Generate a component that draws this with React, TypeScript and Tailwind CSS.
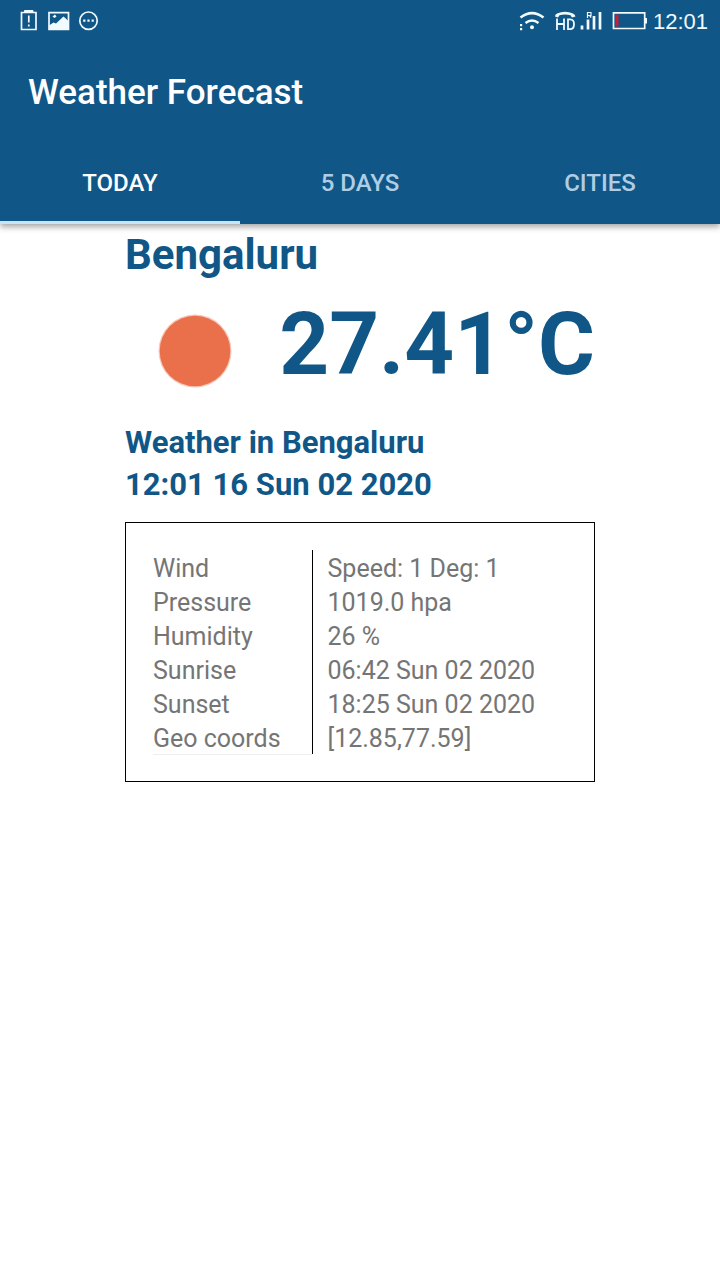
import { useState } from "react";

const tabs = ["TODAY", "5 DAYS", "CITIES"];

const details = [
  ["Wind", "Speed: 1 Deg: 1"],
  ["Pressure", "1019.0 hpa"],
  ["Humidity", "26 %"],
  ["Sunrise", "06:42 Sun 02 2020"],
  ["Sunset", "18:25 Sun 02 2020"],
  ["Geo coords", "[12.85,77.59]"],
];

function StatusBar() {
  return (
    <div className="flex h-[42px] items-center justify-between pr-3 pl-5 text-[#f0faff]">
      <svg width="80" height="42" viewBox="0 0 80 42" fill="none" stroke="currentColor" aria-hidden="true">
        <path d="M1.5 12.500h14.500v17H1.500z" strokeWidth="1.7" />
        <path d="M4.500 12V10.500h8.500v1.500z" fill="currentColor" strokeWidth="1" />
        <path d="M8.800 15.500v7M8.800 24.500v2" strokeWidth="1.700" />
        <path d="M29 12.700h19.500v16.600H29z" strokeWidth="1.700" />
        <path d="M29 29v-3.500l4.500-3 2.500 1 7.500-7 5 4.500v8z" fill="currentColor" stroke="none" />
        <path d="M32.500 16.500l2 1.500 2-1.500-1.500-2z" fill="currentColor" stroke="none" />
        <circle cx="68.500" cy="20.700" r="8.700" strokeWidth="1.700" />
        <path d="M63.200 20.700h2.200M67.400 20.700h2.200M71.600 20.700h2.200" strokeWidth="2.200" />
      </svg>
      <div className="flex items-center gap-[5px]">
        <svg width="130" height="42" viewBox="518 0 130 42" fill="none" stroke="currentColor" aria-hidden="true">
          <path d="M520.500 17.500q11.500-8.800 23 0" strokeWidth="2.600" />
          <path d="M525.500 23q6.500-5 13 0" strokeWidth="2.600" />
          <circle cx="532" cy="27.300" r="2" fill="currentColor" stroke="none" />
          <path d="M520 25.200h2.200M520 29.200h2.200" strokeWidth="2.200" />
          <path d="M555 16.500q0-2 2-3 8-3.600 16 0 2 1 2.500 3l-3.500 1-1.500-2.200q-5.500-1.500-11 0l-1.500 2.200z" fill="currentColor" stroke="none" />
          <path d="M557 18.500v11.500M564 18.500v11.500M557 24h7M568 19.300v9.900h2q4 0 4-5t-4-4.900z" strokeWidth="1.800" />
          <path d="M582 25.500v4M588 19.500v10M594 16v13.500M600 12v17.500" strokeWidth="2.700" />
          <path d="M587.500 18v-5.500h3.500v3h-3.500M589.500 15.500l1.800 2" strokeWidth="1.200" />
          <path d="M613.500 12.800h31.200v15.700h-31.200z" strokeWidth="1.700" />
          <path d="M645 18h2v5.500h-2z" fill="currentColor" stroke="none" />
          <path d="M615.500 14.500h3v12h-3z" fill="#c81e38" stroke="none" />
        </svg>
        <time className="pt-0.5 font-['Liberation_Sans',sans-serif] text-[22px] leading-6">12:01</time>
      </div>
    </div>
  );
}

export default function App() {
  const [active, setActive] = useState(0);

  return (
    <div className="min-h-screen bg-white font-[Roboto,sans-serif]">
      <header className="bg-[#105787] shadow-[0_3px_6px_rgba(0,0,0,0.35)]">
        <StatusBar />
        <div className="flex h-[100px] items-center px-7 pt-0.5">
          <h1 className="text-[35px] leading-10 font-medium text-white">Weather Forecast</h1>
        </div>
        <div role="tablist" className="grid grid-cols-3">
          {tabs.map((tab, i) => (
            <button
              key={tab}
              type="button"
              role="tab"
              aria-selected={active === i}
              onClick={() => setActive(i)}
              className={
                active === i
                  ? "h-[82px] border-b-[3px] border-[#c4e6fa] pt-0.5 text-2xl font-medium text-white"
                  : "h-[82px] border-b-[3px] border-transparent pt-0.5 text-2xl font-medium text-[#afcee5]"
              }
            >
              {tab}
            </button>
          ))}
        </div>
      </header>

      <main className="mx-auto w-full max-w-[470px] text-[#105787]">
        <h2 className="pt-1 text-[42px] leading-[54px] font-bold">Bengaluru</h2>
        <div className="flex h-[140px] items-center justify-between">
          <svg width="140" height="140" viewBox="0 0 140 140" role="img" aria-label="Clear sky">
            <circle cx="70" cy="69" r="36.500" fill="#ea704b" fillOpacity="0.4" />
            <circle cx="70" cy="69" r="35.300" fill="#ea704b" />
          </svg>
          <p className="pb-4 text-[87px] leading-[104px] font-bold whitespace-nowrap">27.41°C</p>
        </div>
        <div className="text-[31px] leading-[42px] font-bold">
          <p>Weather in Bengaluru</p>
          <p>12:01 16 Sun 02 2020</p>
        </div>
        <section className="mt-4 border border-black p-[27px]">
          <table className="w-full border-collapse text-left text-[25px] leading-[30px] text-[#757575]">
            <tbody>
              {details.map(([label, value]) => (
                <tr key={label}>
                  <th scope="row" className="w-[159px] border-r border-black p-0 pt-1 font-normal">
                    {label}
                  </th>
                  <td className="p-0 pt-1 pl-[15px]">{value}</td>
                </tr>
              ))}
            </tbody>
          </table>
          <div className="-mb-px h-px w-[159px] bg-[#eeeeee]" />
        </section>
      </main>
    </div>
  );
}
